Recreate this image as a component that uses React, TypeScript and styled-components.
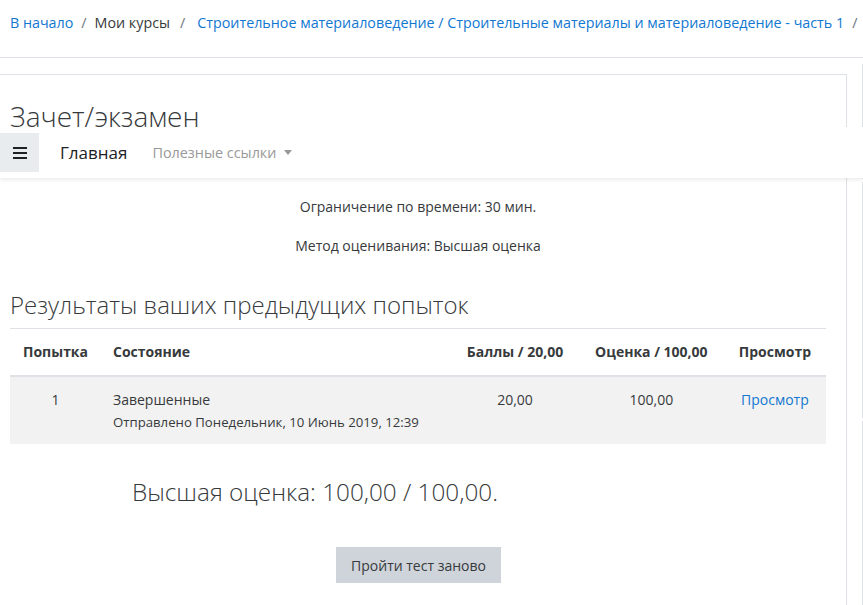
import React from "react";
import styled, { createGlobalStyle } from "styled-components";

const GlobalStyle = createGlobalStyle`
  html, body {
    margin: 0;
    padding: 0;
    background: #fff;
  }
  body {
    font-family: "Open Sans", "Noto Sans", sans-serif;
    font-size: 14px;
    color: #373a3c;
    overflow: hidden;
  }
`;

const Page = styled.div`
  position: relative;
  width: 863px;
  height: 605px;
  overflow: hidden;
`;

const Breadcrumb = styled.nav`
  display: flex;
  align-items: center;
  height: 44px;
  padding: 0 0 13px 10px;
  border-bottom: 1px solid #dee2e6;
  box-sizing: content-box;
  font-size: 14.3px;
  white-space: nowrap;
`;

const Crumb = styled.span<{ $link?: boolean }>`
  color: ${(p) => (p.$link ? "#1177d1" : "#373a3c")};
`;

const Sep = styled.span<{ $wide?: boolean }>`
  color: #6c757d;
  padding: 0 ${(p) => (p.$wide ? "12px 0 10px" : "8px")};
`;

const Body = styled.div`
  display: flex;
  align-items: flex-start;
  margin-top: 16px;
`;

const Card = styled.section`
  width: 837px;
  margin-left: -1px;
  border: 1px solid #dee2e6;
  border-bottom: none;
  padding: 0 20px 0 10px;
  height: 560px;
`;

const Side = styled.aside`
  display: flex;
  flex-direction: column;
  gap: 3px;
  margin-left: 15px;
  margin-top: -10px;
`;

const SideBlock = styled.div<{ $h: number }>`
  width: 20px;
  height: ${(p) => p.$h}px;
  border-left: 1px solid #dee2e6;
`;

const Title = styled.h2`
  margin: 24px 0 0;
  font-size: 28px;
  font-weight: 300;
  line-height: 34px;
  color: #373a3c;
`;

const Info = styled.p`
  margin: 0 0 17px;
  text-align: center;
  line-height: 22px;
  font-size: 14px;
`;

const InfoBlock = styled.div`
  margin-top: 63px;
`;

const Subtitle = styled.h3`
  margin: 33px 0 0;
  font-size: 24px;
  font-weight: 300;
  line-height: 29px;
  padding-bottom: 9px;
  border-bottom: 1px solid #dee2e6;
`;

const Table = styled.table`
  width: 816px;
  border-collapse: collapse;
  font-size: 14px;
`;

const Th = styled.th<{ $align?: string; $w?: number }>`
  text-align: ${(p) => p.$align || "center"};
  width: ${(p) => (p.$w ? `${p.$w}px` : "auto")};
  font-weight: 700;
  padding: 12px 12px;
  line-height: 22px;
  border-bottom: 2px solid #dee2e6;
  white-space: nowrap;
`;

const Row = styled.tr`
  background: #f2f2f2;
`;

const Td = styled.td<{ $align?: string }>`
  text-align: ${(p) => p.$align || "center"};
  vertical-align: top;
  padding: 12px 12px 11px;
  line-height: 22px;
  white-space: nowrap;
`;

const Small = styled.span`
  display: block;
  font-size: 13.2px;
  line-height: 22px;
`;

const Link = styled.span`
  color: #1177d1;
`;

const Summary = styled.h3`
  margin: 33px 0 0 122px;
  font-size: 24.3px;
  font-weight: 300;
  line-height: 29px;
`;

const ButtonRow = styled.div`
  display: flex;
  justify-content: center;
  margin-top: 41px;
`;

const Button = styled.button`
  font-family: inherit;
  font-size: 14px;
  color: #373a3c;
  background: #ced4da;
  border: none;
  border-radius: 0;
  height: 36px;
  padding: 0 15px;
  margin-left: 1px;
`;

const Navbar = styled.header`
  position: absolute;
  top: 127px;
  left: 0;
  width: 863px;
  height: 51px;
  display: flex;
  align-items: center;
  background: #fff;
  box-shadow: 0 2px 4px rgba(0, 0, 0, 0.08);
`;

const Burger = styled.div`
  width: 39px;
  height: 39px;
  background: #e9ecef;
  display: flex;
  align-items: center;
  justify-content: center;
  margin-right: 21px;
`;

const NavMain = styled.span`
  font-size: 17px;
  color: #1d2125;
  margin-right: 25px;
`;

const NavMuted = styled.span`
  font-size: 14.4px;
  color: #999;
  display: flex;
  align-items: center;
  gap: 8px;
`;

const Caret = styled.span`
  width: 0;
  height: 0;
  border-left: 4px solid transparent;
  border-right: 4px solid transparent;
  border-top: 5px solid #999;
`;

export default function App() {
  return (
    <Page>
      <GlobalStyle />
      <Breadcrumb>
        <Crumb $link>В начало</Crumb>
        <Sep>/</Sep>
        <Crumb>Мои курсы</Crumb>
        <Sep $wide>/</Sep>
        <Crumb $link>
          Строительное материаловедение / Строительные материалы и материаловедение - часть 1
        </Crumb>
        <Sep>/</Sep>
      </Breadcrumb>
      <Body>
        <Card>
          <Title>Зачет/экзамен</Title>
          <InfoBlock>
            <Info>Ограничение по времени: 30 мин.</Info>
            <Info>Метод оценивания: Высшая оценка</Info>
          </InfoBlock>
          <Subtitle>Результаты ваших предыдущих попыток</Subtitle>
          <Table>
            <thead>
              <tr>
                <Th $w={67}>Попытка</Th>
                <Th $align="left">Состояние</Th>
                <Th>Баллы / 20,00</Th>
                <Th>Оценка / 100,00</Th>
                <Th>Просмотр</Th>
              </tr>
            </thead>
            <tbody>
              <Row>
                <Td>1</Td>
                <Td $align="left">
                  Завершенные
                  <Small>Отправлено Понедельник, 10 Июнь 2019, 12:39</Small>
                </Td>
                <Td>20,00</Td>
                <Td>100,00</Td>
                <Td>
                  <Link>Просмотр</Link>
                </Td>
              </Row>
            </tbody>
          </Table>
          <Summary>Высшая оценка: 100,00 / 100,00.</Summary>
          <ButtonRow>
            <Button>Пройти тест заново</Button>
          </ButtonRow>
        </Card>
        <Side>
          <SideBlock $h={115} />
          <SideBlock $h={236} />
          <SideBlock $h={300} />
        </Side>
      </Body>
      <Navbar>
        <Burger>
          <svg width="14" height="12" viewBox="0 0 14 12">
            <rect x="0" y="0" width="14" height="2" fill="#1d2125" />
            <rect x="0" y="5" width="14" height="2" fill="#1d2125" />
            <rect x="0" y="10" width="14" height="2" fill="#1d2125" />
          </svg>
        </Burger>
        <NavMain>Главная</NavMain>
        <NavMuted>
          Полезные ссылки
          <Caret />
        </NavMuted>
      </Navbar>
    </Page>
  );
}
